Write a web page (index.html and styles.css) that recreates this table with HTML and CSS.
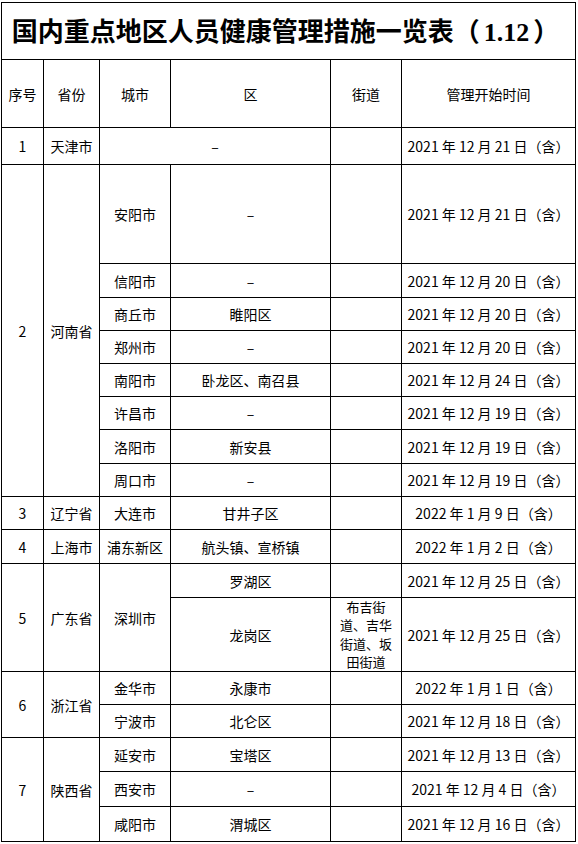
FILE: index.html
```html
<!DOCTYPE html>
<html lang="zh-CN">
<head>
<meta charset="utf-8">
<title>国内重点地区人员健康管理措施一览表（1.12）</title>
<link rel="stylesheet" href="styles.css">
</head>
<body>
<table class="sheet">
  <colgroup>
    <col class="c-no">
    <col class="c-prov">
    <col class="c-city">
    <col class="c-dist">
    <col class="c-street">
    <col class="c-time">
  </colgroup>
  <tr class="h57">
    <td colspan="6" class="title">国内重点地区人员健康管理措施一览表（<span class="num">1.12</span>）</td>
  </tr>
  <tr class="h68">
    <td>序号</td><td>省份</td><td>城市</td><td>区</td><td>街道</td><td>管理开始时间</td>
  </tr>
  <tr class="h37">
    <td>1</td><td>天津市</td><td colspan="2">–</td><td></td><td>2021 年 12 月 21 日（含）</td>
  </tr>
  <tr class="h99">
    <td rowspan="8">2</td><td rowspan="8">河南省</td><td>安阳市</td><td>–</td><td></td><td>2021 年 12 月 21 日（含）</td>
  </tr>
  <tr class="h34">
    <td>信阳市</td><td>–</td><td></td><td>2021 年 12 月 20 日（含）</td>
  </tr>
  <tr class="h33">
    <td>商丘市</td><td>睢阳区</td><td></td><td>2021 年 12 月 20 日（含）</td>
  </tr>
  <tr class="h33">
    <td>郑州市</td><td>–</td><td></td><td>2021 年 12 月 20 日（含）</td>
  </tr>
  <tr class="h33">
    <td>南阳市</td><td>卧龙区、南召县</td><td></td><td>2021 年 12 月 24 日（含）</td>
  </tr>
  <tr class="h33">
    <td>许昌市</td><td>–</td><td></td><td>2021 年 12 月 19 日（含）</td>
  </tr>
  <tr class="h34">
    <td>洛阳市</td><td>新安县</td><td></td><td>2021 年 12 月 19 日（含）</td>
  </tr>
  <tr class="h33">
    <td>周口市</td><td>–</td><td></td><td>2021 年 12 月 19 日（含）</td>
  </tr>
  <tr class="h33">
    <td>3</td><td>辽宁省</td><td>大连市</td><td>甘井子区</td><td></td><td>2022 年 1 月 9 日（含）</td>
  </tr>
  <tr class="h34">
    <td>4</td><td>上海市</td><td>浦东新区</td><td>航头镇、宣桥镇</td><td></td><td>2022 年 1 月 2 日（含）</td>
  </tr>
  <tr class="h34">
    <td rowspan="2">5</td><td rowspan="2">广东省</td><td rowspan="2">深圳市</td><td>罗湖区</td><td></td><td>2021 年 12 月 25 日（含）</td>
  </tr>
  <tr class="h74">
    <td>龙岗区</td><td class="street">布吉街<br>道、吉华<br>街道、坂<br>田街道</td><td>2021 年 12 月 25 日（含）</td>
  </tr>
  <tr class="h33">
    <td rowspan="2">6</td><td rowspan="2">浙江省</td><td>金华市</td><td>永康市</td><td></td><td>2022 年 1 月 1 日（含）</td>
  </tr>
  <tr class="h33">
    <td>宁波市</td><td>北仑区</td><td></td><td>2021 年 12 月 18 日（含）</td>
  </tr>
  <tr class="h34">
    <td rowspan="3">7</td><td rowspan="3">陕西省</td><td>延安市</td><td>宝塔区</td><td></td><td>2021 年 12 月 13 日（含）</td>
  </tr>
  <tr class="h35">
    <td>西安市</td><td>–</td><td></td><td>2021 年 12 月 4 日（含）</td>
  </tr>
  <tr class="h35">
    <td>咸阳市</td><td>渭城区</td><td></td><td>2021 年 12 月 16 日（含）</td>
  </tr>
</table>
</body>
</html>
```
FILE: styles.css
```css
html, body {
  margin: 0;
  padding: 0;
  background: #fff;
}

body {
  font-family: "Noto Sans CJK SC", "Noto Sans", sans-serif;
  font-size: 14px;
  color: #000;
}

.sheet {
  margin: 2px 0 0 1px;
  width: 575px;
  table-layout: fixed;
  border-collapse: separate;
  border-spacing: 0;
  border-top: 1px solid #000;
  border-left: 1px solid #000;
}

.c-no { width: 42px; }
.c-prov { width: 56px; }
.c-city { width: 71px; }
.c-dist { width: 160px; }
.c-street { width: 71px; }
.c-time { width: 174px; }

.sheet td {
  padding: 0;
  border-right: 1px solid #000;
  border-bottom: 1px solid #000;
  text-align: center;
  vertical-align: middle;
  line-height: 18px;
  white-space: nowrap;
}

.sheet td.title {
  font-size: 26px;
  font-weight: 700;
  line-height: 30px;
  padding-right: 6px;
}

.title .num {
  font-family: "Liberation Serif", serif;
  font-weight: 700;
  margin: 0 4px;
}

.sheet td.street {
  font-size: 13px;
  line-height: 18.25px;
}

.h57 { height: 57px; }
.h68 { height: 68px; }
.h37 { height: 37px; }
.h99 { height: 99px; }
.h34 { height: 34px; }
.h33 { height: 33px; }
.h74 { height: 74px; }
.h35 { height: 35px; }
```
